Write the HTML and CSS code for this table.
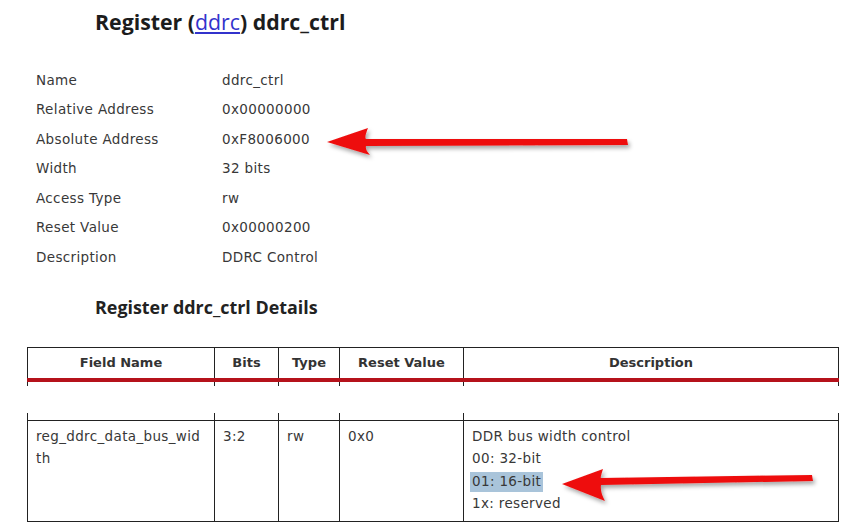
FILE: index.html
```html
<!DOCTYPE html>
<html>
<head>
<meta charset="utf-8">
<link rel="stylesheet" href="styles.css">
</head>
<body>
<div class="page">
  <h1 class="title">Register (<a href="#" class="link">ddrc</a>) ddrc_ctrl</h1>
  <div class="info">
    <div class="lbl">Name</div><div class="val">ddrc_ctrl</div>
    <div class="lbl">Relative Address</div><div class="val">0x00000000</div>
    <div class="lbl">Absolute Address</div><div class="val">0xF8006000</div>
    <div class="lbl">Width</div><div class="val">32 bits</div>
    <div class="lbl">Access Type</div><div class="val">rw</div>
    <div class="lbl">Reset Value</div><div class="val">0x00000200</div>
    <div class="lbl">Description</div><div class="val">DDRC Control</div>
  </div>
  <h2 class="subtitle">Register ddrc_ctrl Details</h2>
  <table class="fields">
    <colgroup>
      <col class="c1"><col class="c2"><col class="c3"><col class="c4"><col class="c5">
    </colgroup>
    <thead>
      <tr class="head">
        <th>Field Name</th><th>Bits</th><th>Type</th><th>Reset Value</th><th>Description</th>
      </tr>
    </thead>
    <tbody>
      <tr class="stub stub1"><td></td><td></td><td></td><td></td><td></td></tr>
      <tr class="gap"><td colspan="5"></td></tr>
      <tr class="stub stub2"><td></td><td></td><td></td><td></td><td></td></tr>
      <tr class="row">
        <td>reg_ddrc_data_bus_wid<br>th</td>
        <td>3:2</td>
        <td>rw</td>
        <td>0x0</td>
        <td>
          <div>DDR bus width control</div>
          <div>00: 32-bit</div>
          <div><span class="hl">01: 16-bit</span></div>
          <div>1x: reserved</div>
        </td>
      </tr>
    </tbody>
  </table>
</div>
<svg class="arrow arrow1" width="330" height="50" viewBox="0 0 330 50">
  <defs>
    <filter id="sh" x="-10%" y="-40%" width="120%" height="180%">
      <feDropShadow dx="2" dy="3" stdDeviation="2" flood-color="#000" flood-opacity="0.35"/>
    </filter>
  </defs>
  <path filter="url(#sh)" fill="#ee1111" d="M7 24 L48 10 Q44 20 46 21 L307 21 L308 27 L46 28 Q45 32 50 37 Z"/>
</svg>
<svg class="arrow arrow2" width="270" height="50" viewBox="0 0 270 50">
  <defs>
    <filter id="sh2" x="-10%" y="-40%" width="120%" height="180%">
      <feDropShadow dx="2" dy="3" stdDeviation="2" flood-color="#000" flood-opacity="0.35"/>
    </filter>
  </defs>
  <path filter="url(#sh2)" fill="#ee1111" d="M7 26 L48 11 Q45 20 46 20 L257 17 L258 23 L46 27 Q45 34 50 43 Z"/>
</svg>
</body>
</html>
```

FILE: styles.css
```css
html, body {
  margin: 0;
  padding: 0;
  background: #ffffff;
}
body {
  width: 846px;
  height: 528px;
  overflow: hidden;
  position: relative;
  font-family: "DejaVu Sans", Verdana, sans-serif;
  color: #383838;
}
.page {
  padding: 0 0 0 27px;
}
.title {
  font-family: "Open Sans", "Liberation Sans", sans-serif;
  font-weight: 700;
  font-size: 21.3px;
  line-height: 24px;
  margin: 0;
  padding: 10px 0 0 68px;
  color: #1c1c1c;
}
.link {
  color: #3333cc;
  text-decoration: underline;
  font-weight: 400;
}
.info {
  display: grid;
  grid-template-columns: 186px auto;
  grid-auto-rows: 29.5px;
  align-items: center;
  margin: 31px 0 0 9px;
  font-size: 13.5px;
  letter-spacing: 0.35px;
}
.subtitle {
  font-family: "Open Sans", "Liberation Sans", sans-serif;
  font-weight: 700;
  font-size: 17.9px;
  line-height: 22px;
  margin: 24px 0 0 68px;
  color: #222222;
}
.fields {
  border-collapse: collapse;
  table-layout: fixed;
  width: 811px;
  margin-top: 29px;
  font-size: 13.5px;
}
.c1 { width: 187px; }
.c2 { width: 64px; }
.c3 { width: 61px; }
.c4 { width: 124px; }
.c5 { width: 375px; }
.head th {
  height: 30px;
  padding: 0;
  border: 1.5px solid #222222;
  border-bottom: 4px solid #b5121b;
  font-weight: 700;
  font-size: 13px;
  color: #333333;
  text-align: center;
  vertical-align: middle;
}
.stub td {
  padding: 0;
  border-left: 1.5px solid #222222;
  border-right: 1.5px solid #222222;
}
.stub1 td { height: 4px; }
.stub2 td { height: 7px; }
.gap td {
  height: 27px;
  padding: 0;
  border: none;
}
.row td {
  height: 96px;
  border: 1.5px solid #222222;
  vertical-align: top;
  padding: 4px 8px 0 8px;
  line-height: 22.5px;
  letter-spacing: 0.35px;
}
.hl {
  background: #a9c4da;
  padding: 1px 2px 3px 2px;
  margin-left: -2px;
}
.arrow {
  position: absolute;
  overflow: visible;
}
.arrow1 {
  left: 320px;
  top: 118px;
}
.arrow2 {
  left: 555px;
  top: 458px;
}
```
